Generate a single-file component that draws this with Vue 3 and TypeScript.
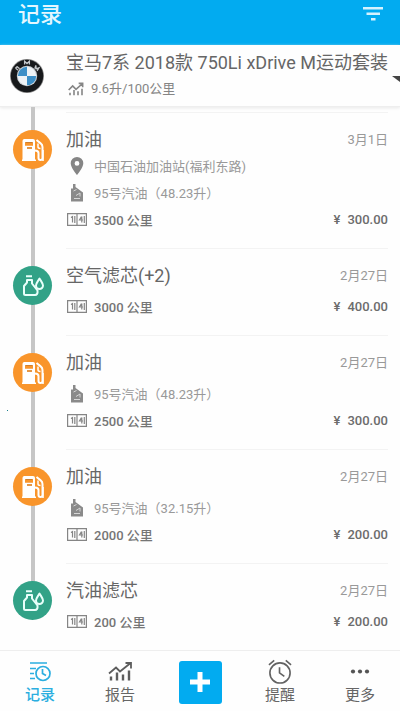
<script setup lang="ts">
interface Entry {
  id: number
  kind: 'fuel' | 'service'
  title: string
  date: string
  place?: string
  fuel?: string
  mileage: string
  price: string
}

const entries: Entry[] = [
  { id: 1, kind: 'fuel', title: '加油', date: '3月1日', place: '中国石油加油站(福利东路)', fuel: '95号汽油（48.23升）', mileage: '3500 公里', price: '300.00' },
  { id: 2, kind: 'service', title: '空气滤芯(+2)', date: '2月27日', mileage: '3000 公里', price: '400.00' },
  { id: 3, kind: 'fuel', title: '加油', date: '2月27日', fuel: '95号汽油（48.23升）', mileage: '2500 公里', price: '300.00' },
  { id: 4, kind: 'fuel', title: '加油', date: '2月27日', fuel: '95号汽油（32.15升）', mileage: '2000 公里', price: '200.00' },
  { id: 5, kind: 'service', title: '汽油滤芯', date: '2月27日', mileage: '200 公里', price: '200.00' },
]
</script>

<template>
  <div class="page">
    <header class="top">
      <h1>记录</h1>
      <button class="filter" type="button" aria-label="筛选">
        <svg width="22" height="16" viewBox="0 0 22 16" fill="none" stroke="#d5f2fe" stroke-width="2.4">
          <path d="M1 2.2h20M4.5 7.8h13.5M9 13.2h4.5" />
        </svg>
      </button>
    </header>

    <section class="car">
      <svg class="badge" width="34" height="34" viewBox="0 0 34 34">
        <circle cx="17" cy="17" r="17" fill="#8d8d8d" />
        <circle cx="17" cy="17" r="16.2" fill="#17191b" />
        <circle cx="17" cy="17" r="10.2" fill="#c9ced2" />
        <circle cx="17" cy="17" r="9.2" fill="#eef3f6" />
        <path d="M17 17V7.800A9.200 9.200 0 0 0 7.800 17z" fill="#3d8fc6" />
        <path d="M17 17v9.200A9.200 9.200 0 0 0 26.200 17z" fill="#3d8fc6" />
        <g fill="none" stroke="#c4c8cb" stroke-width="1.300">
          <path d="M5.500 9.300l2.800 1.900M7 7.600l2.600 2.100M5.500 9.300L7 7.600" />
          <path d="M14.600 5.600V2.200l2.400 2.300 2.400-2.300v3.400" />
          <path d="M24.800 9.600l1-3.200 .4 3.500 2.700-1.100-1.800 3" />
        </g>
      </svg>
      <div class="car-text">
        <h2>宝马7系 2018款 750Li xDrive M运动套装</h2>
        <p>
          <svg width="16" height="14" viewBox="0 0 24 21" fill="none" stroke="#858585" stroke-width="2.400">
            <path d="M1 12l6-6 5 5 9-8M16 2h6v6M3 20v-4M9 20v-8M15 20v-6M21 20V10" />
          </svg>
          <span>9.6升/100公里</span>
        </p>
      </div>
      <button class="expand" type="button" aria-label="切换车辆"></button>
    </section>

    <main>
      <ol class="list">
        <li v-for="entry in entries" :key="entry.id" class="entry">
          <span class="dot" :class="entry.kind">
            <svg v-if="entry.kind === 'fuel'" width="24" height="24" viewBox="0 0 24 24">
              <path fill="#fff" fill-rule="evenodd" d="M3 1h9a2 2 0 0 1 2 2v18.500h1V23H1v-1.500h.500V3A2 2 0 0 1 3 1zM4 4.200v3.600h8V4.200zM6 10.800h5v-1.500H6z" />
              <path d="M4.500 4.500h7M6 10h5" stroke="#cf7e2c" stroke-width="1" />
              <path d="M15.500 2l4.200 3.400c1.300 1 1.800 2 1.800 3.600v11c0 2.500-4 2.500-4 0v-5c0-1.500-1-2.400-3.500-2.500" fill="none" stroke="#fff" stroke-width="2" />
              <path d="M17 5.500V9c0 1 1 1.500 2.500 1.500" fill="none" stroke="#fff" stroke-width="1.500" />
              <path d="M22 12v11" stroke="#fff" stroke-width="1.600" />
            </svg>
            <svg v-else width="24" height="24" viewBox="0 0 24 24" fill="none" stroke="#e8fffa" stroke-width="2" stroke-linejoin="round">
              <path d="M5 2.200h6M6 6h5v3.500l5.500 7c.4 3-.7 4.500-2.500 4.500H4.500C3.500 21 3 20.500 3 19.500V12l3-3.500z" />
              <path d="M18.500 4.500c-2 3.300-3.500 5-3.500 7a3.500 3.500 0 0 0 7 0c0-2-1.500-3.700-3.500-7z" />
            </svg>
          </span>
          <div class="body" :class="{ located: entry.place }">
            <div class="row head">
              <h3>{{ entry.title }}</h3>
              <time>{{ entry.date }}</time>
            </div>
            <div v-if="entry.place" class="row meta">
              <span class="icon">
                <svg width="14" height="18" viewBox="0 0 14 18">
                  <path fill="#858585" fill-rule="evenodd" d="M7 0a6.300 6.300 0 0 1 6.300 6.300C13.300 11 7 18 7 18S.7 11 .7 6.300A6.300 6.300 0 0 1 7 0zm0 4a2.400 2.400 0 1 0 0 4.800A2.400 2.400 0 0 0 7 4z" />
                </svg>
              </span>
              <span>{{ entry.place }}</span>
            </div>
            <div v-if="entry.fuel" class="row meta">
              <span class="icon">
                <svg width="14" height="18" viewBox="0 0 14 18">
                  <path fill="#8a8a8a" d="M3 0h2.500v3L13 8.500V17.500H1V4.500h2z" />
                  <path d="M3.500 7l3-1.500M6 11.500l4-2.500v3.500M4 14.500h6" fill="none" stroke="#d6d6d6" stroke-width="1" />
                </svg>
              </span>
              <span>{{ entry.fuel }}</span>
            </div>
            <div class="row total">
              <span class="icon">
                <svg width="20" height="13" viewBox="0 0 20 13" fill="none" stroke="#858585" stroke-width="1.200">
                  <path d="M.6 .6h18.800v11.800H.6zM10 .6v11.800M4 4.500l1.500-1v6M14.800 3.500v6M14.500 3.500L12.500 7h3.500M7.800 3v7M17.300 3v7" />
                </svg>
              </span>
              <span>{{ entry.mileage }}</span>
              <span class="price"><span>¥</span><span>{{ entry.price }}</span></span>
            </div>
          </div>
        </li>
      </ol>
      <i class="speck"></i>
    </main>

    <nav class="tabs">
      <a href="#records" class="tab active">
        <svg width="24" height="24" viewBox="0 0 24 24" fill="none" stroke="#2baee0" stroke-width="1.700">
          <path d="M2 3.500h17M2 9h6M2 14h4M2 19h5" />
          <circle cx="15" cy="14" r="7" />
          <path d="M14.500 9.500V14l3.500 2" />
        </svg>
        <span>记录</span>
      </a>
      <a href="#reports" class="tab">
        <svg width="24" height="24" viewBox="0 0 24 24" fill="none" stroke="#5d5d5d" stroke-width="1.800">
          <path d="M1 14l7-6 4 4 10-8M17.500 3.500H23V9" />
          <path d="M3 21v-4M9 21v-8M15 21v-6M21 21V11" stroke-width="2.400" />
        </svg>
        <span>报告</span>
      </a>
      <button class="add" type="button" aria-label="添加记录">
        <svg width="20" height="20" viewBox="0 0 20 20" stroke="#fff" stroke-width="5">
          <path d="M10 0v20M0 10h20" />
        </svg>
      </button>
      <a href="#reminders" class="tab">
        <svg width="26" height="26" viewBox="0 0 26 26" fill="none" stroke="#626262" stroke-width="1.700">
          <circle cx="13" cy="14.500" r="10.500" />
          <path d="M12.500 8.500v6l5 3.500M1.500 6l5.500-4.500M24.500 6L19 1.500" />
        </svg>
        <span>提醒</span>
      </a>
      <a href="#more" class="tab">
        <svg width="24" height="24" viewBox="0 0 24 24" fill="#555">
          <circle cx="5" cy="12" r="2.100" />
          <circle cx="12" cy="12" r="2.100" />
          <circle cx="19" cy="12" r="2.100" />
        </svg>
        <span>更多</span>
      </a>
    </nav>
  </div>
</template>

<style>
body {
  margin: 0;
  background: #fefefe;
}
</style>

<style scoped>
.page {
  display: flex;
  flex-direction: column;
  min-height: 100vh;
  overflow: hidden;
  font-family: Roboto, "Noto Sans CJK SC", sans-serif;
  color: #666;
}
h1,
h2,
h3,
p {
  margin: 0;
  font-weight: 400;
}
svg {
  display: block;
  flex: none;
}
button {
  border: 0;
  padding: 0;
  background: none;
}
.top {
  display: flex;
  justify-content: space-between;
  align-items: flex-start;
  height: 45px;
  padding: 0 16px 0 18px;
  background: #02abf0;
}
.top h1 {
  font-size: 22px;
  line-height: 30px;
  font-weight: 500;
  color: #e4f7ff;
}
.filter {
  padding-top: 6px;
}
.car {
  position: relative;
  display: flex;
  align-items: center;
  height: 61px;
  padding-left: 10px;
  border-bottom: 1px solid #eee;
  box-shadow: 0 1px 3px #e8e8e8;
}
.car-text {
  padding-left: 22px;
}
.car h2 {
  font-size: 18px;
  line-height: 26px;
  white-space: nowrap;
}
.car p {
  display: flex;
  align-items: center;
  gap: 7px;
  padding-left: 2px;
  font-size: 13px;
  line-height: 26px;
  color: #858585;
}
.expand {
  position: absolute;
  right: -8px;
  top: 31px;
  border: 8px solid transparent;
  border-top: 6px solid #444;
  border-bottom: 0;
}
main {
  position: relative;
  flex: 1;
}
.list {
  position: relative;
  margin: 0;
  padding: 5px 0 0;
  list-style: none;
}
.list::before {
  content: "";
  position: absolute;
  left: 31px;
  top: 0;
  bottom: 48px;
  width: 4px;
  background: #c6c6c6;
}
.entry {
  display: grid;
  grid-template-columns: 39px 1fr;
  column-gap: 14px;
  padding: 0 12px 0 13px;
}
.dot {
  position: relative;
  display: flex;
  align-items: center;
  justify-content: center;
  width: 39px;
  height: 39px;
  margin-top: 18px;
  border-radius: 50%;
}
.fuel {
  background: #f9952b;
}
.service {
  background: #32a287;
}
.body {
  padding: 12px 0 15px;
  border-top: 1px solid #f3f3f3;
}
.row {
  display: flex;
  align-items: center;
  height: 27px;
  font-size: 13px;
}
.head {
  justify-content: space-between;
  height: 26px;
  margin-bottom: 6px;
}
.located .head {
  margin-bottom: 1px;
}
.head h3 {
  font-size: 18px;
}
.head time {
  color: #999;
}
.meta {
  color: #999;
}
.total {
  color: #757575;
  font-weight: 500;
}
.icon {
  display: flex;
  justify-content: center;
  width: 22px;
  margin-right: 6px;
}
.price {
  display: flex;
  gap: 7px;
  margin-left: auto;
  color: #6c6c6c;
}
.speck {
  position: absolute;
  left: 7px;
  top: 303px;
  width: 1px;
  height: 1px;
  background: #1c7f8c;
}
.tabs {
  display: grid;
  grid-template-columns: repeat(5, 1fr);
  justify-items: center;
  align-items: center;
  height: 62px;
  border-top: 1px solid #eee;
}
.tab {
  display: flex;
  flex-direction: column;
  align-items: center;
  font-size: 15px;
  line-height: 22px;
  text-decoration: none;
  color: #666;
}
.tab svg {
  height: 25px;
}
.active {
  color: #2baee0;
  font-weight: 500;
}
.add {
  display: flex;
  align-items: center;
  justify-content: center;
  width: 43px;
  height: 43px;
  border-radius: 3px;
  background: #02abf0;
}
</style>
